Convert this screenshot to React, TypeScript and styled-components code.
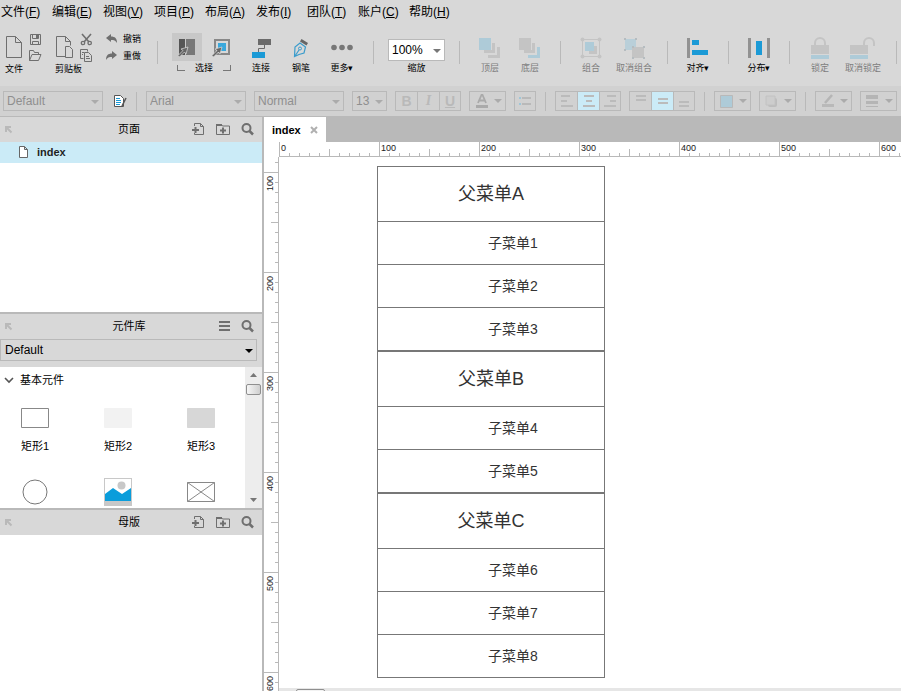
import React, { ReactNode, useEffect, useState } from "react";
import styled, { createGlobalStyle, css } from "styled-components";

const c = {
  bar: "#d8d8d8",
  format: "#d1d1d1",
  line: "#b9b9b9",
  icon: "#6f6f6f",
  blue: "#1b9ad6",
  paleBlue: "#aecbd8",
  pale: "#c4c4c4",
  active: "#cbebf7",
};

const GlobalStyle = createGlobalStyle`
  *, *::before, *::after { box-sizing: border-box; }
  body {
    margin: 0;
    font-family: "Liberation Sans", "Noto Sans CJK SC", sans-serif;
    font-size: 12px;
    line-height: 16px;
    color: #000;
  }
  button, select, input { font: inherit; color: inherit; }
  ul { margin: 0; padding: 0; list-style: none; }
  svg { display: block; flex: none; }
`;

const bareButton = css`
  border: 0;
  padding: 0;
  background: none;
`;

const Page = styled.div`
  display: flex;
  flex-direction: column;
  height: 100vh;
  overflow: hidden;
  background: ${c.bar};
`;

/* Menu bar */

const MenuBar = styled.nav`
  display: flex;
  flex: none;
  height: 23px;
  padding-left: 1px;
  align-items: center;
`;

const MenuItem = styled.button`
  ${bareButton}
  width: 51px;
  height: 22px;
  text-align: left;
  white-space: nowrap;
`;

/* Main toolbar */

const Toolbar = styled.div`
  display: flex;
  flex: none;
  height: 63px;
  padding-top: 1px;
  align-items: flex-start;
`;

const Divider = styled.div`
  flex: none;
  width: 1px;
  height: 23px;
  margin: 17px 10px 0;
  background: ${c.line};
`;

const FileTools = styled.div`
  display: flex;
  flex-direction: column;
  flex: none;
  width: 50px;
  padding: 7px 0 0 5px;
`;

const FileToolRow = styled.div`
  display: flex;
  align-items: center;
  gap: 5px;
  height: 32px;
`;

const SmallStack = styled.div`
  display: flex;
  flex-direction: column;
  gap: 3px;
`;

const IconButton = styled.button`
  ${bareButton}
  display: flex;
  align-items: center;
  justify-content: center;
  flex: none;
`;

const ToolLabel = styled.span<{ $muted?: boolean }>`
  font-size: 9px;
  line-height: 12px;
  height: 12px;
  white-space: nowrap;
  color: ${(p) => (p.$muted ? "#7d7d7d" : "#000")};
`;

const History = styled.div`
  display: flex;
  flex-direction: column;
  flex: none;
  width: 47px;
  gap: 4px;
  padding: 8px 0 0 6px;
`;

const HistoryButton = styled.button`
  ${bareButton}
  display: flex;
  align-items: center;
  gap: 5px;
  height: 13px;
`;

const SelectTools = styled.div`
  display: flex;
  flex-direction: column;
  flex: none;
  margin: 9px 5px 0 4px;
`;

const SelectRow = styled.div`
  display: flex;
  gap: 4px;
`;

const SelectMode = styled.button<{ $on?: boolean }>`
  ${bareButton}
  display: flex;
  align-items: center;
  justify-content: center;
  width: 30px;
  height: 28px;
  background: ${(p) => (p.$on ? "#c8c8c8" : "none")};
`;

const SelectCaption = styled.div`
  display: flex;
  justify-content: space-between;
  padding: 1px 5px 0;
`;

const Bracket = styled.i<{ $side: "left" | "right" }>`
  width: 8px;
  height: 6px;
  margin-top: 3px;
  border-bottom: 1px solid #777;
  border-${(p) => p.$side}: 1px solid #777;
`;

const ToolButton = styled.button<{ $width: number }>`
  ${bareButton}
  display: flex;
  flex-direction: column;
  align-items: center;
  flex: none;
  width: ${(p) => p.$width}px;
  padding-top: 10px;
`;

const ToolIcon = styled.span`
  display: flex;
  align-items: center;
  justify-content: center;
  height: 28px;
`;

const ZoomField = styled.div`
  display: flex;
  flex-direction: column;
  align-items: center;
  flex: none;
  width: 65px;
  padding-top: 15px;
  gap: 1px;
`;

/* Drop-downs */

const SelectBox = styled.span<{ $width: number; $tall?: boolean; $white?: boolean }>`
  position: relative;
  display: flex;
  flex: none;
  width: ${(p) => p.$width}px;
  height: ${(p) => (p.$tall ? 22 : 20)}px;
  border: 1px solid ${c.line};
  background: ${(p) => (p.$white ? "#fff" : "none")};
  color: ${(p) => (p.$tall ? "#000" : "#8f8f8f")};

  select {
    appearance: none;
    flex: 1;
    min-width: 0;
    border: 0;
    padding: 0 3px;
    background: none;
    opacity: 1;
  }
  svg {
    position: absolute;
    right: 3px;
    top: 50%;
    margin-top: -1px;
    pointer-events: none;
  }
`;

/* Formatting bar */

const FormatBar = styled.div`
  display: flex;
  flex: none;
  height: 31px;
  padding: 0 3px;
  gap: 8px;
  align-items: center;
  background: ${c.format};
  border-bottom: 1px solid ${c.line};
`;

const FormatDivider = styled.div`
  flex: none;
  width: 1px;
  height: 19px;
  margin: 0 1px;
  background: ${c.line};
`;

const StyleButton = styled(IconButton)`
  width: 14px;
  margin-left: 2px;
`;

const ButtonStrip = styled.div`
  display: flex;
  flex: none;
  height: 20px;
  border: 1px solid ${c.line};
`;

const StripButton = styled.button<{ $on?: boolean }>`
  ${bareButton}
  display: flex;
  align-items: center;
  justify-content: center;
  width: 22px;
  font-size: 14px;
  font-weight: 700;
  color: #b9b9b9;
  background: ${(p) => (p.$on ? c.active : "none")};

  &:first-child { width: 21px; }
  &:last-child { width: 21px; }
  &:only-child { width: 20px; }
  & + & { border-left: 1px solid ${c.line}; }
  i { font-family: "Liberation Serif", serif; }
`;

const DropButton = styled.button`
  ${bareButton}
  display: flex;
  align-items: center;
  justify-content: space-between;
  flex: none;
  width: 37px;
  height: 20px;
  padding: 0 3px 0 5px;
  border: 1px solid ${c.line};
`;

/* Workspace */

const Workspace = styled.div`
  display: flex;
  flex: 1;
  min-height: 0;
  background: #fff;
`;

const Sidebar = styled.aside`
  display: flex;
  flex-direction: column;
  flex: none;
  width: 264px;
  border-right: 2px solid ${c.line};
`;

const Panel = styled.section<{ $basis?: number }>`
  display: flex;
  flex-direction: column;
  flex: ${(p) => (p.$basis ? `0 0 ${p.$basis}px` : "1 1 0")};
  min-height: 0;
  overflow: hidden;

  & + & { border-top: 2px solid ${c.line}; }
`;

const PanelHeader = styled.header`
  display: grid;
  grid-template-columns: 68px 1fr 68px;
  align-items: center;
  justify-items: start;
  flex: none;
  height: 25px;
  padding: 0 8px 1px 4px;
  background: ${c.bar};
`;

const PanelTitle = styled.h2`
  justify-self: center;
  margin: 0;
  font-size: 11px;
  font-weight: 400;
  line-height: 16px;
`;

const PanelActions = styled.div`
  display: flex;
  justify-self: end;
  gap: 11px;
`;

const PageLink = styled.a`
  display: flex;
  align-items: center;
  gap: 9px;
  height: 21px;
  padding: 0 0 1px 19px;
  font-size: 11px;
  font-weight: 700;
  color: #1f1f1f;
  text-decoration: none;
  background: ${c.active};
`;

const LibraryPicker = styled.div`
  flex: none;
  height: 28px;
  background: ${c.bar};

  select { padding-left: 4px; }
`;

const LibraryBody = styled.div`
  display: flex;
  flex: 1;
  min-height: 0;
`;

const LibraryContent = styled.div`
  flex: 1;
  min-width: 0;
  overflow: hidden;
`;

const LibraryHeading = styled.button`
  ${bareButton}
  display: flex;
  align-items: center;
  gap: 6px;
  height: 26px;
  padding-left: 4px;
  font-size: 11px;
`;

const WidgetGrid = styled.div`
  display: grid;
  grid-template-columns: repeat(3, 70px);
  column-gap: 13px;
  padding-top: 9px;
`;

const Widget = styled.button`
  ${bareButton}
  display: flex;
  flex-direction: column;
  align-items: center;
  height: 74px;
  font-size: 11px;
`;

const WidgetArt = styled.span`
  display: flex;
  align-items: center;
  height: 32px;
  margin-bottom: 4px;
`;

const ScrollTrack = styled.div`
  display: flex;
  flex-direction: column;
  align-items: center;
  width: 17px;
  padding: 6px 0;
  background: #ededed;
`;

const ScrollThumb = styled.div`
  width: 15px;
  height: 11px;
  margin: 7px 0 auto;
  border: 1px solid #8f8f8f;
  border-radius: 2px;
  background: linear-gradient(90deg, #f6f6f6, #cfcfcf);
`;

const Editor = styled.main`
  display: flex;
  flex-direction: column;
  flex: 1;
  min-width: 0;
`;

const TabBar = styled.div`
  display: flex;
  flex: none;
  height: 25px;
  background: ${c.line};
`;

const Tab = styled.div`
  display: flex;
  align-items: center;
  gap: 9px;
  padding: 0 8px;
  font-size: 11px;
  font-weight: 700;
  background: #fff;
`;

const RulerTop = styled.div`
  flex: none;
  height: 15px;
  padding-left: 15px;
  overflow: hidden;
`;

const EditorRow = styled.div`
  display: flex;
  flex: 1;
  min-height: 0;
`;

const RulerLeft = styled.div`
  flex: none;
  width: 15px;
  overflow: hidden;
`;

const Viewport = styled.div`
  display: flex;
  flex-direction: column;
  flex: 1;
  min-width: 0;
`;

const Canvas = styled.div`
  flex: 1;
  min-height: 0;
  padding: 9px 0 0 98px;
  overflow: hidden;
`;

const CanvasScroll = styled.div`
  flex: none;
  height: 3px;
  padding: 1px 0 0 17px;
  background: #e6e6e6;
  overflow: hidden;
`;

const CanvasThumb = styled.div`
  width: 29px;
  height: 11px;
  border: 1px solid #8f8f8f;
  border-radius: 2px;
  background: #f2f2f2;
`;

const MenuGroup = styled.ul`
  width: 228px;
  border: 1px solid #777;
  color: #333;
`;

const ParentEntry = styled.li`
  height: 54px;
  font-size: 18px;
  line-height: 54px;
  text-align: center;
`;

const ChildEntry = styled.li`
  height: 43px;
  padding-left: 44px;
  border-top: 1px solid #777;
  font-size: 14px;
  line-height: 42px;
  text-align: center;
`;

/* Icons */

type ArtProps = { w: number; h: number; children: ReactNode };
const Art = ({ w, h, children }: ArtProps) => (
  <svg width={w} height={h} viewBox={`0 0 ${w} ${h}`} fill="none" aria-hidden="true">
    {children}
  </svg>
);

const Caret = ({ color = "#8f8f8f" }: { color?: string }) => (
  <Art w={8} h={4}><path d="M0 0h8L4 4z" fill={color} /></Art>
);

const FileIcon = () => (
  <Art w={18} h={24}><path d="M1.5 1.5h9l6 6v15h-15zM10.5 1.5v6h6" stroke={c.icon} /></Art>
);
const SaveIcon = () => (
  <Art w={13} h={13}>
    <path d="M1.5 1.5h10v10h-10zM3.5 1.5v4h6v-4M3.5 11.5v-3h6v3" stroke={c.icon} />
    <path d="M7 2h2v3H7z" fill={c.icon} />
  </Art>
);
const OpenIcon = () => (
  <Art w={14} h={13}><path d="M1.5 11.5v-10h4l1 2h4v2M1.5 11.5l2.5-6h9l-2.5 6z" stroke={c.icon} /></Art>
);
const ClipboardIcon = () => (
  <Art w={19} h={24}>
    <path d="M10.5 21.5h-9v-20h9l5 5v4M10.5 1.5v5h5" stroke={c.icon} />
    <path d="M10.5 11.5h4l3 3v8h-7z" stroke={c.icon} />
  </Art>
);
const CutIcon = () => (
  <Art w={13} h={13}>
    <path d="M2 1l7 8M11 1L4 9" stroke={c.icon} strokeWidth="1.6" />
    <circle cx="3" cy="10" r="1.7" stroke={c.icon} strokeWidth="1.3" />
    <circle cx="9.7" cy="10" r="1.7" stroke={c.icon} strokeWidth="1.3" />
  </Art>
);
const CopyIcon = () => (
  <Art w={14} h={13}>
    <path d="M4.5 9.5h-3v-9h7v2" stroke={c.icon} />
    <path d="M5.5 3.5h4l3 3v6h-7zM7 7.5h3M7 9.5h4" stroke={c.icon} />
    <path d="M3 3.5h2M3 5.5h1" stroke={c.icon} />
  </Art>
);
const UndoIcon = () => (
  <Art w={12} h={10}><path d="M0 4l5-4v2.500c4 0 6 2 6 6.500-1.500-2.500-3-3-6-3V8z" fill={c.icon} /></Art>
);
const RedoIcon = () => (
  <Art w={12} h={10}><path d="M11 4L6 0v2.500C2 2.500 0 4.500 0 9c1.500-2.500 3-3 6-3v2z" fill={c.icon} /></Art>
);

const Pointer = () => (
  <path
    d="M10 10L3 12l2 1.500L0 18.500 1.500 20 6.500 15l1.500 2z"
    fill="#666"
    stroke="#dedede"
    strokeWidth=".7"
  />
);
const IntersectIcon = () => (
  <Art w={18} h={20}>
    <path d="M1 2h6v16H1z" fill="#555" />
    <path d="M8 2h9v16H8z" fill="#777" />
    <Pointer />
  </Art>
);
const ContainIcon = () => (
  <Art w={19} h={20}>
    <path d="M3 3h14v14H3z" stroke="#888" strokeWidth="2" />
    <path d="M6 6h8v8H6z" fill="#3aa8dc" />
    <Pointer />
  </Art>
);
const ConnectIcon = () => (
  <Art w={20} h={20}>
    <path d="M7 1h13v6H7z" fill="#6b6b6b" />
    <path d="M13.5 7v3.500h-6V14" stroke="#6b6b6b" />
    <path d="M1 14h13v6H1z" fill={c.blue} />
  </Art>
);
const PenIcon = () => (
  <Art w={16} h={20}>
    <path d="M1.500 18.500l.5-9.500 5-4 5.500 4-1.500 6-5 1.500zM2 18l4-6" stroke="#3a9ccc" strokeWidth="1.200" />
    <circle cx="7" cy="10.500" r="1.500" stroke="#3a9ccc" />
    <path d="M8.500 1l6.500 4-1.500 2.500L7 3.500z" fill="#666" />
  </Art>
);
const MoreIcon = () => (
  <Art w={22} h={20}>
    {[3, 11, 19].map((x) => <circle key={x} cx={x} cy="9.5" r="2.8" fill="#777" />)}
  </Art>
);
const FrontIcon = () => (
  <Art w={22} h={20}>
    <path d="M9 9h12v11H9z" fill={c.pale} />
    <path d="M8 8h10v9H8z" fill={c.bar} />
    <path d="M5 5h11v10H5z" fill={c.pale} />
    <path d="M4 4h9v8H4z" fill={c.bar} />
    <path d="M0 0h12v12H0z" fill={c.paleBlue} />
  </Art>
);
const BackIcon = () => (
  <Art w={22} h={20}>
    <path d="M9 9h12v11H9z" fill={c.paleBlue} />
    <path d="M8 8h10v9H8z" fill={c.bar} />
    <path d="M5 5h11v10H5z" fill={c.pale} />
    <path d="M4 4h9v8H4z" fill={c.bar} />
    <path d="M0 0h12v12H0z" fill={c.pale} />
  </Art>
);
const GroupIcon = () => (
  <Art w={22} h={22}>
    <path d="M2.5 2.5h17v17h-17z" stroke={c.pale} />
    <path d="M9 9h8v8H9z" fill={c.pale} />
    <path d="M5 5h9v9H5z" fill={c.paleBlue} />
    {[2.5, 19.5].map((x) => [2.5, 19.5].map((y) => (
      <circle key={`${x}-${y}`} cx={x} cy={y} r="2" fill={c.pale} />
    )))}
  </Art>
);
const UngroupIcon = () => (
  <Art w={22} h={22}>
    <path d="M2 2h11v11H2z" fill="#b9cfd9" />
    <path d="M9 10h12v11H9z" fill={c.pale} />
    {[[1, 1], [12, 1], [1, 12], [9, 9], [20, 9], [9, 20], [20, 20]].map(([x, y]) => (
      <path key={`${x}-${y}`} d={`M${x} ${y}h2v2h-2z`} fill="#b5bcc0" />
    ))}
  </Art>
);
const AlignIcon = () => (
  <Art w={22} h={20}>
    <path d="M0 0h3v20H0z" fill="#929292" />
    <path d="M5 2h7v5H5zM5 12h16v5H5z" fill={c.blue} />
  </Art>
);
const DistributeIcon = () => (
  <Art w={22} h={20}>
    <path d="M0 0h3v20H0zM19 0h3v20h-3z" fill="#929292" />
    <path d="M8 3h6v14H8z" fill={c.blue} />
  </Art>
);
const LockIcon = () => (
  <Art w={18} h={22}>
    <path d="M4 9V6a5 5 0 0110 0v3" stroke={c.pale} strokeWidth="2" />
    <path d="M0 8h18v9H0z" fill={c.pale} />
    <path d="M0 18h18v4H0z" fill={c.paleBlue} />
  </Art>
);
const UnlockIcon = () => (
  <Art w={26} h={22}>
    <path d="M14 9V6a5 5 0 0110 0v3" stroke={c.pale} strokeWidth="2" />
    <path d="M0 8h18v9H0z" fill={c.pale} />
    <path d="M0 18h18v4H0z" fill={c.paleBlue} />
  </Art>
);

const StyleIcon = () => (
  <Art w={14} h={14}>
    <path d="M1.5 1.5h6l3 3v8h-9z" fill="#fff" stroke="#555" />
    <path d="M3 4.5h4M3 6.5h5M3 8.5h5M3 10.5h4" stroke={c.blue} />
    <path d="M13 4L9 12" stroke="#555" strokeWidth="1.6" />
  </Art>
);
const BulletsIcon = () => (
  <Art w={14} h={12}>
    <path d="M1 3h2M1 9h2" stroke="#9fc6d8" strokeWidth="2" />
    <path d="M4 3h9M4 9h9" stroke={c.line} strokeWidth="2" />
  </Art>
);
const Lines = ({ rows }: { rows: [number, number, number][] }) => (
  <Art w={14} h={16}>
    {rows.map(([x, y, w]) => <path key={y} d={`M${x} ${y}h${w}v2h-${w}z`} fill="#bbb" />)}
  </Art>
);
const TextColorIcon = () => (
  <Art w={14} h={16}>
    <path d="M3 10L6.500 2h1L11 10M4.500 7.500h5" stroke="#aaa" strokeWidth="1.800" />
    <path d="M1 12h12v3H1z" fill="#aaa" />
  </Art>
);
const FillIcon = () => (
  <Art w={13} h={13}><path d="M.5.5h12v12H.5z" fill={c.paleBlue} stroke={c.line} /></Art>
);
const ShadowIcon = () => (
  <Art w={13} h={13}>
    <rect x="3" y="3" width="9" height="9" rx="2" fill="#bdbdbd" />
    <path d="M1 1h9v9H1z" fill="#cdcdcd" stroke="#c2c2c2" />
  </Art>
);
const LineColorIcon = () => (
  <Art w={14} h={14}>
    <path d="M4 9l7-8" stroke="#b5b5b5" strokeWidth="2.500" />
    <path d="M1 10h12v3H1z" fill="#b9b9b9" />
  </Art>
);
const WeightIcon = () => (
  <Art w={13} h={14}>
    <path d="M0 1h12v4H0zM0 7h12v3H0zM0 12h12v1H0z" fill="#b5b5b5" />
  </Art>
);

const DockIcon = () => (
  <Art w={9} h={9}>
    <path d="M2 7V2h5M2 2l5.500 5.500" stroke={c.line} strokeWidth="2" />
  </Art>
);
const AddPageIcon = () => (
  <Art w={13} h={14}>
    <path d="M2.5 4V1.5h6l3 3v8h-9V11M8.5 1.5v3h3" stroke={c.icon} />
    <path d="M0 8h7M3.500 5v6" stroke={c.icon} strokeWidth="2" />
  </Art>
);
const AddFolderIcon = () => (
  <Art w={14} h={14}>
    <path d="M.5 12.5v-10h5l1 1.500h7v8.500z" stroke={c.icon} />
    <path d="M0 2h6v2H0z" fill={c.icon} />
    <path d="M4 8.500h6M7 5.500v6" stroke={c.icon} strokeWidth="2" />
  </Art>
);
const SearchIcon = () => (
  <Art w={13} h={14}>
    <circle cx="5.5" cy="6" r="4" stroke={c.icon} strokeWidth="2" />
    <path d="M8.5 9l3.500 3.500" stroke={c.icon} strokeWidth="2.5" />
  </Art>
);
const ListIcon = () => (
  <Art w={11} h={14}><path d="M0 3h11M0 7h11M0 11h11" stroke={c.icon} strokeWidth="2" /></Art>
);
const PageIcon = () => (
  <Art w={9} h={12}><path d="M.5.5h5l3 3v8h-8zM5.500.5v3h3" fill="#fff" stroke="#666" /></Art>
);
const ChevronIcon = () => (
  <Art w={10} h={8}><path d="M1 2l4 4 4-4" stroke="#555" strokeWidth="1.6" /></Art>
);
const CloseIcon = () => (
  <Art w={8} h={8}><path d="M1 1l6 6M7 1L1 7" stroke="#b0b0b0" strokeWidth="2" /></Art>
);

const RectArt = ({ fill, stroke }: { fill: string; stroke: string }) => (
  <Art w={28} h={20}><path d="M.5.5h27v19H.5z" fill={fill} stroke={stroke} /></Art>
);
const CircleArt = () => (
  <Art w={26} h={26}><circle cx="13" cy="13" r="12" stroke="#777" /></Art>
);
const ImageArt = () => (
  <Art w={28} h={28}>
    <path d="M0 0h28v28H0z" fill="#c8c8c8" />
    <path d="M1 1h26v22H1z" fill="#fff" />
    <circle cx="17.5" cy="7.5" r="4" fill="#c8c8c8" />
    <path d="M1 16l8-6 9 6 9-6v13H1z" fill="#0a9ddb" />
  </Art>
);
const PlaceholderArt = () => (
  <Art w={28} h={20}><path d="M.5.5h27v19H.5zM.5.5l27 19M27.500.5l-27 19" stroke="#888" /></Art>
);

/* Rulers */

const RULER_SIZE = 15;
const RULER_TOP_START = 279;
const RULER_LEFT_START = 157;

const tickLength = (i: number) => (i % 10 === 0 ? RULER_SIZE : i % 5 === 0 ? 8 : 4);
const range = (count: number) => Array.from({ length: Math.max(0, Math.ceil(count)) }, (_, i) => i);

const HorizontalRuler = ({ length }: { length: number }) => (
  <svg width={length} height={RULER_SIZE} shapeRendering="crispEdges">
    <path d={`M0 14.5H${length}`} stroke={c.line} />
    {range(length / 10).map((i) => (
      <path key={i} d={`M${i * 10 + 0.5} 15v-${tickLength(i)}`} stroke={c.line} />
    ))}
    {range((length - 16) / 100).map((i) => (
      <text key={i} x={i * 100 + 2} y="9" fontSize="9" fill="#222">{i * 100}</text>
    ))}
  </svg>
);

const VerticalRuler = ({ length }: { length: number }) => (
  <svg width={RULER_SIZE} height={length} shapeRendering="crispEdges">
    <path d={`M14.5 0V${length}`} stroke={c.line} />
    {range(length / 10).map((i) => (
      <path key={i} d={`M15 ${i * 10 + 5.5}h-${tickLength(i + 9)}`} stroke={c.line} />
    ))}
    {range((length - 20) / 100).map((i) => (
      <text
        key={i}
        transform={`translate(9 ${i * 100 + 34}) rotate(-90)`}
        fontSize="9"
        fill="#222"
      >
        {(i + 1) * 100}
      </text>
    ))}
  </svg>
);

const useWindowSize = () => {
  const read = () => ({ width: window.innerWidth, height: window.innerHeight });
  const [size, setSize] = useState(read);
  useEffect(() => {
    const update = () => setSize(read());
    window.addEventListener("resize", update);
    return () => window.removeEventListener("resize", update);
  }, []);
  return size;
};

/* Parts */

const menus: [string, string][] = [
  ["文件", "F"], ["编辑", "E"], ["视图", "V"], ["项目", "P"], ["布局", "A"],
  ["发布", "I"], ["团队", "T"], ["账户", "C"], ["帮助", "H"],
];

type ToolProps = { label: string; icon: ReactNode; width?: number; muted?: boolean };
const Tool = ({ label, icon, width = 40, muted }: ToolProps) => (
  <ToolButton type="button" $width={width} disabled={muted}>
    <ToolIcon>{icon}</ToolIcon>
    <ToolLabel $muted={muted}>{label}</ToolLabel>
  </ToolButton>
);

type DropdownProps = {
  id: string;
  label?: string;
  value: string;
  width: number;
  tall?: boolean;
  white?: boolean;
  caret?: string;
  disabled?: boolean;
};
const Dropdown = ({ id, label, value, width, tall, white, caret, disabled }: DropdownProps) => (
  <SelectBox $width={width} $tall={tall} $white={white}>
    <select id={id} aria-label={label} disabled={disabled} defaultValue={value}>
      <option>{value}</option>
    </select>
    <Caret color={caret ?? (disabled ? "#ababab" : "#777")} />
  </SelectBox>
);

const DropTool = ({ label, icon }: { label: string; icon: ReactNode }) => (
  <DropButton type="button" aria-label={label} disabled>
    {icon}
    <Caret color="#ababab" />
  </DropButton>
);

const PageActions = () => (
  <PanelActions>
    <IconButton type="button" aria-label="添加页面"><AddPageIcon /></IconButton>
    <IconButton type="button" aria-label="添加文件夹"><AddFolderIcon /></IconButton>
    <IconButton type="button" aria-label="搜索"><SearchIcon /></IconButton>
  </PanelActions>
);

const Header = ({ title, children }: { title: string; children: ReactNode }) => (
  <PanelHeader>
    <IconButton type="button" aria-label="停靠"><DockIcon /></IconButton>
    <PanelTitle>{title}</PanelTitle>
    {children}
  </PanelHeader>
);

const widgets: { name: string; caption?: string; art: ReactNode }[] = [
  { name: "矩形1", caption: "矩形1", art: <RectArt fill="#fff" stroke="#888" /> },
  { name: "矩形2", caption: "矩形2", art: <RectArt fill="#f2f2f2" stroke="#f2f2f2" /> },
  { name: "矩形3", caption: "矩形3", art: <RectArt fill="#d7d7d7" stroke="#d7d7d7" /> },
  { name: "椭圆", art: <CircleArt /> },
  { name: "图片", art: <ImageArt /> },
  { name: "占位符", art: <PlaceholderArt /> },
];

const groups = [
  { parent: "父菜单A", items: ["子菜单1", "子菜单2", "子菜单3"] },
  { parent: "父菜单B", items: ["子菜单4", "子菜单5"] },
  { parent: "父菜单C", items: ["子菜单6", "子菜单7", "子菜单8"] },
];

export default function App() {
  const [mode, setMode] = useState("intersect");
  const { width, height } = useWindowSize();

  return (
    <Page>
      <GlobalStyle />
      <MenuBar>
        {menus.map(([name, key]) => (
          <MenuItem key={key} type="button">{name}(<u>{key}</u>)</MenuItem>
        ))}
      </MenuBar>

      <Toolbar>
        <FileTools>
          <FileToolRow>
            <IconButton type="button" aria-label="新建文件"><FileIcon /></IconButton>
            <SmallStack>
              <IconButton type="button" aria-label="保存"><SaveIcon /></IconButton>
              <IconButton type="button" aria-label="打开"><OpenIcon /></IconButton>
            </SmallStack>
          </FileToolRow>
          <ToolLabel>文件</ToolLabel>
        </FileTools>
        <FileTools>
          <FileToolRow>
            <IconButton type="button" aria-label="粘贴"><ClipboardIcon /></IconButton>
            <SmallStack>
              <IconButton type="button" aria-label="剪切"><CutIcon /></IconButton>
              <IconButton type="button" aria-label="复制"><CopyIcon /></IconButton>
            </SmallStack>
          </FileToolRow>
          <ToolLabel>剪贴板</ToolLabel>
        </FileTools>
        <History>
          <HistoryButton type="button"><UndoIcon /><ToolLabel>撤销</ToolLabel></HistoryButton>
          <HistoryButton type="button"><RedoIcon /><ToolLabel>重做</ToolLabel></HistoryButton>
        </History>
        <Divider />
        <SelectTools>
          <SelectRow>
            <SelectMode type="button" aria-label="相交选择" $on={mode === "intersect"} onClick={() => setMode("intersect")}>
              <IntersectIcon />
            </SelectMode>
            <SelectMode type="button" aria-label="包含选择" $on={mode === "contain"} onClick={() => setMode("contain")}>
              <ContainIcon />
            </SelectMode>
          </SelectRow>
          <SelectCaption>
            <Bracket $side="left" />
            <ToolLabel>选择</ToolLabel>
            <Bracket $side="right" />
          </SelectCaption>
        </SelectTools>
        <Tool label="连接" icon={<ConnectIcon />} />
        <Tool label="钢笔" icon={<PenIcon />} />
        <Tool label="更多▾" icon={<MoreIcon />} width={42} />
        <Divider />
        <ZoomField>
          <Dropdown id="zoom" value="100%" width={57} tall white />
          <ToolLabel as="label" htmlFor="zoom">缩放</ToolLabel>
        </ZoomField>
        <Divider />
        <Tool label="顶层" icon={<FrontIcon />} muted />
        <Tool label="底层" icon={<BackIcon />} muted />
        <Divider />
        <Tool label="组合" icon={<GroupIcon />} muted />
        <Tool label="取消组合" icon={<UngroupIcon />} width={46} muted />
        <Divider />
        <Tool label="对齐▾" icon={<AlignIcon />} />
        <Divider />
        <Tool label="分布▾" icon={<DistributeIcon />} />
        <Divider />
        <Tool label="锁定" icon={<LockIcon />} muted />
        <Tool label="取消锁定" icon={<UnlockIcon />} width={46} muted />
        <Divider />
      </Toolbar>

      <FormatBar>
        <Dropdown id="style" label="样式" value="Default" width={100} disabled />
        <StyleButton type="button" aria-label="编辑样式"><StyleIcon /></StyleButton>
        <FormatDivider />
        <Dropdown id="font" label="字体" value="Arial" width={100} disabled />
        <Dropdown id="weight" label="字形" value="Normal" width={90} disabled />
        <Dropdown id="size" label="字号" value="13" width={35} disabled />
        <ButtonStrip>
          <StripButton type="button" disabled>B</StripButton>
          <StripButton type="button" disabled><i>I</i></StripButton>
          <StripButton type="button" disabled><u>U</u></StripButton>
        </ButtonStrip>
        <DropTool label="文字颜色" icon={<TextColorIcon />} />
        <ButtonStrip>
          <StripButton type="button" aria-label="项目符号" disabled><BulletsIcon /></StripButton>
        </ButtonStrip>
        <FormatDivider />
        <ButtonStrip>
          <StripButton type="button" aria-label="左对齐" disabled><Lines rows={[[1, 2, 9], [1, 7, 6], [1, 12, 12]]} /></StripButton>
          <StripButton type="button" aria-label="居中" $on disabled><Lines rows={[[2, 2, 10], [4, 7, 6], [1, 12, 12]]} /></StripButton>
          <StripButton type="button" aria-label="右对齐" disabled><Lines rows={[[4, 2, 9], [7, 7, 6], [1, 12, 12]]} /></StripButton>
        </ButtonStrip>
        <ButtonStrip>
          <StripButton type="button" aria-label="顶端对齐" disabled><Lines rows={[[2, 2, 10], [2, 6, 10]]} /></StripButton>
          <StripButton type="button" aria-label="垂直居中" $on disabled><Lines rows={[[2, 5, 10], [2, 9, 10]]} /></StripButton>
          <StripButton type="button" aria-label="底端对齐" disabled><Lines rows={[[2, 8, 10], [2, 12, 10]]} /></StripButton>
        </ButtonStrip>
        <FormatDivider />
        <DropTool label="填充" icon={<FillIcon />} />
        <DropTool label="阴影" icon={<ShadowIcon />} />
        <FormatDivider />
        <DropTool label="线条颜色" icon={<LineColorIcon />} />
        <DropTool label="线宽" icon={<WeightIcon />} />
      </FormatBar>

      <Workspace>
        <Sidebar>
          <Panel $basis={195}>
            <Header title="页面"><PageActions /></Header>
            <PageLink href="#index"><PageIcon />index</PageLink>
          </Panel>
          <Panel $basis={196}>
            <Header title="元件库">
              <PanelActions>
                <IconButton type="button" aria-label="选项"><ListIcon /></IconButton>
                <IconButton type="button" aria-label="搜索"><SearchIcon /></IconButton>
              </PanelActions>
            </Header>
            <LibraryPicker>
              <Dropdown id="library" label="元件库" value="Default" width={257} tall caret="#000" />
            </LibraryPicker>
            <LibraryBody>
              <LibraryContent>
                <LibraryHeading type="button"><ChevronIcon />基本元件</LibraryHeading>
                <WidgetGrid>
                  {widgets.map((w) => (
                    <Widget key={w.name} type="button" aria-label={w.name}>
                      <WidgetArt>{w.art}</WidgetArt>
                      {w.caption}
                    </Widget>
                  ))}
                </WidgetGrid>
              </LibraryContent>
              <ScrollTrack>
                <Art w={7} h={4}><path d="M0 4h7L3.500 0z" fill="#777" /></Art>
                <ScrollThumb />
                <Art w={7} h={4}><path d="M0 0h7L3.500 4z" fill="#777" /></Art>
              </ScrollTrack>
            </LibraryBody>
          </Panel>
          <Panel>
            <Header title="母版"><PageActions /></Header>
          </Panel>
        </Sidebar>

        <Editor>
          <TabBar>
            <Tab>
              index
              <IconButton type="button" aria-label="关闭"><CloseIcon /></IconButton>
            </Tab>
          </TabBar>
          <RulerTop><HorizontalRuler length={width - RULER_TOP_START} /></RulerTop>
          <EditorRow>
            <RulerLeft><VerticalRuler length={height - RULER_LEFT_START} /></RulerLeft>
            <Viewport>
              <Canvas>
                {groups.map((g) => (
                  <MenuGroup key={g.parent}>
                    <ParentEntry>{g.parent}</ParentEntry>
                    {g.items.map((item) => <ChildEntry key={item}>{item}</ChildEntry>)}
                  </MenuGroup>
                ))}
              </Canvas>
              <CanvasScroll><CanvasThumb /></CanvasScroll>
            </Viewport>
          </EditorRow>
        </Editor>
      </Workspace>
    </Page>
  );
}
